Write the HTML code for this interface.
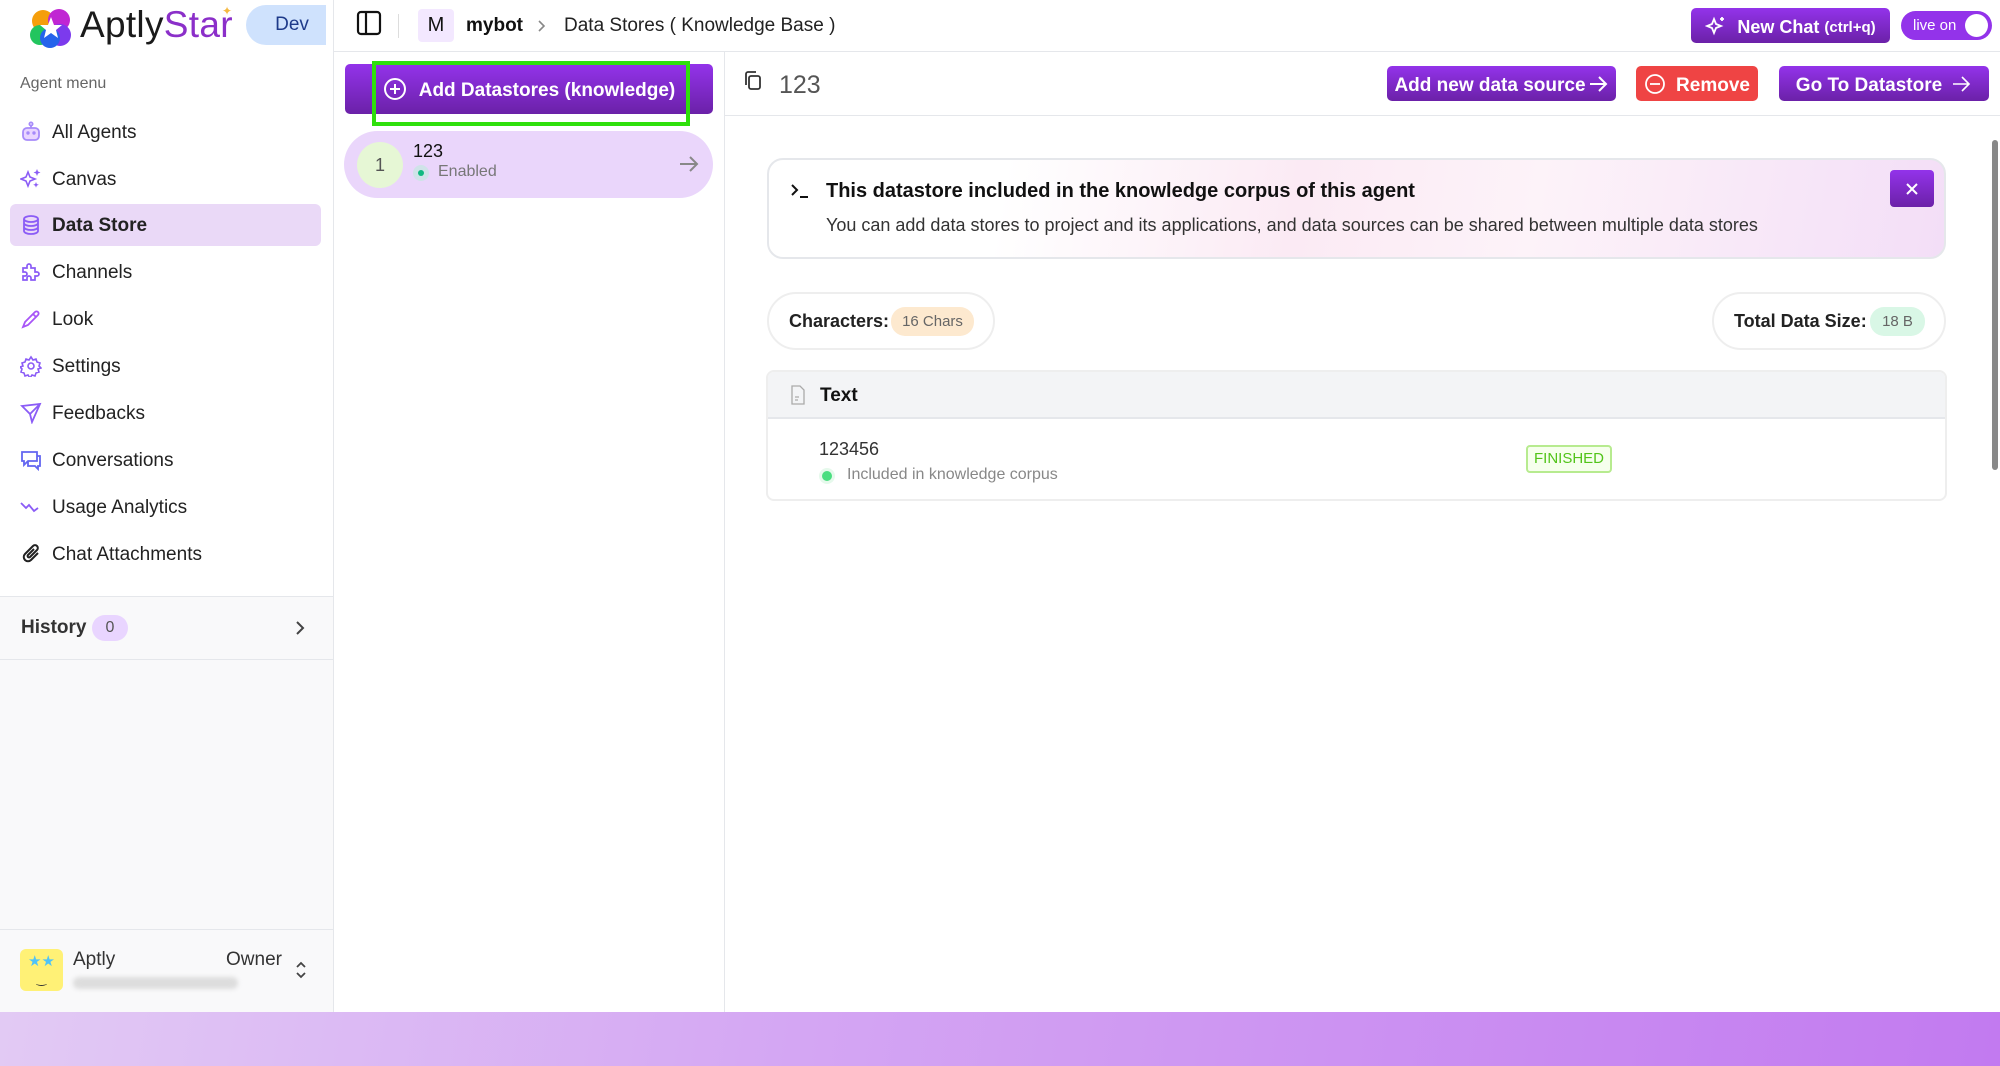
<!DOCTYPE html>
<html><head><meta charset="utf-8">
<style>
*{box-sizing:border-box;margin:0;padding:0}
body{width:2000px;height:1066px;overflow:hidden;font-family:"Liberation Sans",sans-serif;background:#fff;position:relative;color:#222}
.abs{position:absolute}
.btn{position:absolute;background:linear-gradient(#9333ea,#6b21a8);color:#fff;border-radius:5px;display:flex;align-items:center;justify-content:center;font-size:19px;font-weight:bold;line-height:1;padding-top:3px}
.btn svg{flex:none;margin-top:-3px}
.mi{position:absolute;left:10px;width:311px;height:42px;font-size:19px;color:#222;border-radius:6px}
.mi svg{position:absolute;left:10px;top:10px}
.mi span{position:absolute;left:42px;top:11px}
</style></head><body>

<!-- sidebar -->
<div class="abs" style="left:0;top:0;width:334px;height:1012px;background:#fff;border-right:1px solid #e5e7eb"></div>
<div class="abs" style="left:0;top:596px;width:333px;height:416px;background:#f9f9fa;border-top:1px solid #e5e7eb"></div>
<div class="abs" style="left:0;top:659px;width:333px;height:1px;background:#e5e7eb"></div>
<div class="abs" style="left:0;top:929px;width:333px;height:1px;background:#e5e7eb"></div>

<!-- logo -->
<svg class="abs" style="left:30px;top:8px" width="42" height="40" viewBox="0 0 42 40">
<circle cx="13" cy="13" r="11" fill="#f59e0b"/><circle cx="29" cy="12" r="11" fill="#c026d3"/><circle cx="10" cy="27" r="10" fill="#22c55e"/><circle cx="30" cy="27" r="11" fill="#7c3aed"/><circle cx="20" cy="30" r="10" fill="#2563eb"/>
<polygon points="21,9 24,17 32,17 26,22 28,30 21,25 14,30 16,22 10,17 18,17" fill="#fff"/>
</svg>
<div class="abs" style="left:80px;top:4px;font-size:37px;letter-spacing:0.3px"><span style="color:#1a1a1a">Aptly</span><span style="color:#8b2fc9">Star</span></div>
<div class="abs" style="left:222px;top:4px;color:#f5b942;font-size:12px">✦</div>
<div class="abs" style="left:246px;top:5px;width:80px;height:40px;background:#cfe2fd;border-radius:20px 0 0 20px;color:#1e3a8a;font-size:19px;display:flex;align-items:center;justify-content:center;padding-left:12px">Dev</div>

<div class="abs" style="left:20px;top:75px;font-size:16px;color:#666">Agent menu</div>

<div class="mi" style="top:111px"><svg width="22" height="22" viewBox="0 0 22 22" fill="none" stroke="#a78bfa" stroke-width="1.8"><rect x="3" y="7" width="16" height="12" rx="4" fill="#e9d5ff"/><circle cx="11" cy="3" r="1.6"/><line x1="11" y1="4.5" x2="11" y2="7"/><circle cx="8" cy="12" r=".8" fill="#7c3aed"/><circle cx="14" cy="12" r=".8" fill="#7c3aed"/></svg><span>All Agents</span></div>
<div class="mi" style="top:158px"><svg width="22" height="22" viewBox="0 0 22 22" fill="#8b5cf6"><path d="M8 4l2 5 5 2-5 2-2 5-2-5-5-2 5-2z" fill="none" stroke="#8b5cf6" stroke-width="1.6"/><path d="M17 1l1 2.5 2.5 1-2.5 1-1 2.5-1-2.5-2.5-1 2.5-1z"/><path d="M16 14l.8 2 2 .8-2 .8-.8 2-.8-2-2-.8 2-.8z"/></svg><span>Canvas</span></div>
<div class="mi" style="top:204px;background:#ead9f7"><svg width="22" height="22" viewBox="0 0 22 22" fill="none" stroke="#8b5cf6" stroke-width="1.8"><ellipse cx="11" cy="5" rx="7" ry="3"/><path d="M4 5v12c0 1.7 3 3 7 3s7-1.3 7-3V5M4 9c0 1.7 3 3 7 3s7-1.3 7-3M4 13c0 1.7 3 3 7 3s7-1.3 7-3"/></svg><span style="font-weight:bold">Data Store</span></div>
<div class="mi" style="top:251px"><svg width="22" height="22" viewBox="0 0 22 22" fill="none" stroke="#8b5cf6" stroke-width="1.7"><path d="M3 7h4V5a2 2 0 014 0v2h4v4h2a2 2 0 010 4h-2v4H11v-2a2 2 0 00-4 0v2H3v-4h2a2 2 0 000-4H3z"/></svg><span>Channels</span></div>
<div class="mi" style="top:298px"><svg width="22" height="22" viewBox="0 0 22 22" fill="none" stroke="#a855f7" stroke-width="1.8"><path d="M3 19l2-5 8-8 3 3-8 8zM13 6l2-2a2 2 0 013 3l-2 2"/></svg><span>Look</span></div>
<div class="mi" style="top:345px"><svg width="22" height="22" viewBox="0 0 22 22" fill="none" stroke="#8b5cf6" stroke-width="1.6"><circle cx="11" cy="11" r="3"/><path d="M11 2l2 3 3-1 1 3 3 1-1 3 2 2-3 1 1 3-3 1-1 3-3-1-2 3-2-3-3 1-1-3-3-1 1-3-2-2 3-1-1-3 3-1 1-3 3 1z"/></svg><span>Settings</span></div>
<div class="mi" style="top:392px"><svg width="22" height="22" viewBox="0 0 22 22" fill="none" stroke="#8b5cf6" stroke-width="1.8"><path d="M2 4l18-2-8 18-2-8zM10 12l10-10"/></svg><span>Feedbacks</span></div>
<div class="mi" style="top:439px"><svg width="22" height="22" viewBox="0 0 22 22" fill="none" stroke="#6366f1" stroke-width="1.8"><path d="M2 3h15v9H8l-4 4v-4H2zM17 7h3v10h-2v3l-3-3H8v-5"/></svg><span>Conversations</span></div>
<div class="mi" style="top:486px"><svg width="22" height="22" viewBox="0 0 22 22" fill="none" stroke="#8b5cf6" stroke-width="1.8"><path d="M1 7l5 5 3-3 5 6 4-3"/></svg><span>Usage Analytics</span></div>
<div class="mi" style="top:533px"><svg width="22" height="22" viewBox="0 0 22 22" fill="none" stroke="#222" stroke-width="2"><path d="M18 10l-7 7a4 4 0 01-6-6l8-8a2.5 2.5 0 014 4l-7 7a1 1 0 01-2-2l6-6"/></svg><span>Chat Attachments</span></div>

<div class="abs" style="left:21px;top:617px;font-size:19px;color:#333;font-weight:bold">History</div>
<div class="abs" style="left:92px;top:615px;width:36px;height:26px;border-radius:13px;background:#e9d5ff;font-size:16px;color:#555;text-align:center;line-height:26px">0</div>
<svg class="abs" style="left:294px;top:619px" width="12" height="18" viewBox="0 0 12 18" fill="none" stroke="#444" stroke-width="2"><path d="M3 3l6 6-6 6"/></svg>

<!-- user -->
<div class="abs" style="left:20px;top:949px;width:43px;height:42px;background:#fff176;border-radius:6px;font-size:15px;color:#4fc3f7;text-align:center;line-height:26px">★★<div style="color:#333;line-height:8px;font-size:12px">‿</div></div>
<div class="abs" style="left:73px;top:949px;font-size:19px;color:#333">Aptly</div>
<div class="abs" style="left:73px;top:977px;width:165px;height:12px;background:#ddd;border-radius:6px;filter:blur(2px)"></div>
<div class="abs" style="left:226px;top:949px;font-size:19px;color:#333">Owner</div>
<svg class="abs" style="left:295px;top:960px" width="12" height="20" viewBox="0 0 12 20" fill="none" stroke="#444" stroke-width="1.8"><path d="M2 7l4-4 4 4M2 13l4 4 4-4"/></svg>

<!-- top bar -->
<div class="abs" style="left:334px;top:51px;width:1666px;height:1px;background:#e5e7eb"></div>
<svg class="abs" style="left:356px;top:10px" width="26" height="26" viewBox="0 0 26 26" fill="none" stroke="#111" stroke-width="2.2"><rect x="2" y="2" width="22" height="22" rx="3"/><line x1="10" y1="2" x2="10" y2="24"/></svg>
<div class="abs" style="left:398px;top:14px;width:1px;height:24px;background:#ddd"></div>
<div class="abs" style="left:418px;top:9px;width:36px;height:33px;background:#f3e8ff;border-radius:4px;font-size:20px;text-align:center;line-height:33px;color:#111">M</div>
<div class="abs" style="left:466px;top:15px;font-size:19px;font-weight:bold;color:#111">mybot</div>
<svg class="abs" style="left:536px;top:19px" width="10" height="14" viewBox="0 0 10 14" fill="none" stroke="#888" stroke-width="1.6"><path d="M3 2l5 5-5 5"/></svg>
<div class="abs" style="left:564px;top:15px;font-size:19px;color:#222">Data Stores ( Knowledge Base )</div>

<div class="btn" style="left:1691px;top:8px;width:199px;height:35px;font-size:18px"><svg width="22" height="22" viewBox="0 0 22 22" fill="none" stroke="#fff" stroke-width="1.8" style="margin-right:10px"><path d="M9 4l2 5 5 2-5 2-2 5-2-5-5-2 5-2z"/><path d="M17 2v4M15 4h4"/></svg>New Chat <span style="font-size:15px;margin-left:5px">(ctrl+q)</span></div>
<div class="abs" style="left:1901px;top:11px;width:91px;height:29px;background:#9333ea;border-radius:15px;color:#fff;font-size:15px;line-height:29px;padding-left:12px">live on</div>
<div class="abs" style="left:1965px;top:14px;width:23px;height:23px;background:#fff;border-radius:50%"></div>

<!-- middle panel -->
<div class="abs" style="left:724px;top:52px;width:1px;height:960px;background:#e5e7eb"></div>
<div class="btn" style="left:345px;top:64px;width:368px;height:50px;font-size:19px"><svg width="24" height="24" viewBox="0 0 24 24" fill="none" stroke="#fff" stroke-width="2" style="margin-right:12px"><circle cx="12" cy="12" r="10"/><path d="M12 7v10M7 12h10"/></svg>Add Datastores (knowledge)</div>
<div class="abs" style="left:372px;top:61px;width:318px;height:65px;border:4px solid #2fe00c"></div>
<div class="abs" style="left:344px;top:131px;width:369px;height:67px;background:#ead6fb;border-radius:34px"></div>
<div class="abs" style="left:357px;top:142px;width:46px;height:46px;background:#e6f7d5;border-radius:50%;font-size:18px;color:#555;text-align:center;line-height:46px">1</div>
<div class="abs" style="left:413px;top:141px;font-size:18px;color:#111">123</div>
<div class="abs" style="left:413px;top:165px;width:16px;height:16px;border-radius:50%;background:#cfe3e8"></div>
<div class="abs" style="left:418px;top:170px;width:6px;height:6px;border-radius:50%;background:#10b981"></div>
<div class="abs" style="left:438px;top:163px;font-size:16px;color:#777">Enabled</div>
<svg class="abs" style="left:678px;top:154px" width="22" height="20" viewBox="0 0 22 20" fill="none" stroke="#888" stroke-width="2"><path d="M2 10h17M12 3l7 7-7 7"/></svg>

<!-- right header -->
<div class="abs" style="left:725px;top:115px;width:1275px;height:1px;background:#e5e7eb"></div>
<svg class="abs" style="left:743px;top:70px" width="20" height="22" viewBox="0 0 20 22" fill="none" stroke="#333" stroke-width="1.8"><rect x="6" y="6" width="11" height="13" rx="2"/><path d="M3 15V4a2 2 0 012-2h8"/></svg>
<div class="abs" style="left:779px;top:71px;font-size:25px;color:#555">123</div>
<div class="btn" style="left:1387px;top:66px;width:229px;height:35px">Add new data source<svg width="20" height="18" viewBox="0 0 20 18" fill="none" stroke="#fff" stroke-width="2" style="margin-left:3px"><path d="M1 9h16M10 2l7 7-7 7"/></svg></div>
<div class="btn" style="left:1636px;top:66px;width:122px;height:35px;background:#ef4444"><svg width="22" height="22" viewBox="0 0 22 22" fill="none" stroke="#fff" stroke-width="1.8" style="margin-right:10px"><circle cx="11" cy="11" r="9"/><path d="M6 11h10"/></svg>Remove</div>
<div class="btn" style="left:1779px;top:66px;width:210px;height:35px">Go To Datastore<svg width="20" height="18" viewBox="0 0 20 18" fill="none" stroke="#fff" stroke-width="1.6" style="margin-left:10px"><path d="M1 9h16M10 2l7 7-7 7"/></svg></div>

<!-- scrollbar -->
<div class="abs" style="left:1992px;top:140px;width:6px;height:330px;background:#888;border-radius:3px"></div>

<!-- banner -->
<div class="abs" style="left:767px;top:158px;width:1179px;height:101px;border:2px solid #e5e7eb;border-radius:16px;background:linear-gradient(100deg,#fff 20%,#fbeaf4 45%,#fdf3f9 65%,#f3def7 100%)"></div>
<svg class="abs" style="left:790px;top:182px" width="20" height="18" viewBox="0 0 20 18" fill="none" stroke="#111" stroke-width="2"><path d="M2 3l5 5-5 5M10 15h8"/></svg>
<div class="abs" style="left:826px;top:180px;font-size:20px;font-weight:bold;color:#111">This datastore included in the knowledge corpus of this agent</div>
<div class="abs" style="left:826px;top:215px;font-size:18px;color:#333">You can add data stores to project and its applications, and data sources can be shared between multiple data stores</div>
<div class="abs" style="left:1890px;top:170px;width:44px;height:37px;background:linear-gradient(#9333ea,#6b21a8);border-radius:4px"></div>
<svg class="abs" style="left:1904px;top:181px" width="16" height="16" viewBox="0 0 16 16" stroke="#fff" stroke-width="2"><path d="M3 3l10 10M13 3L3 13"/></svg>

<!-- stats -->
<div class="abs" style="left:767px;top:292px;width:228px;height:58px;border:2px solid #eee;border-radius:29px"></div>
<div class="abs" style="left:789px;top:311px;font-size:18px;font-weight:bold;color:#222">Characters:</div>
<div class="abs" style="left:891px;top:307px;width:83px;height:29px;background:#fde9cf;border-radius:14px;font-size:15px;color:#666;text-align:center;line-height:29px">16 Chars</div>
<div class="abs" style="left:1712px;top:292px;width:234px;height:58px;border:2px solid #eee;border-radius:29px"></div>
<div class="abs" style="left:1734px;top:311px;font-size:18px;font-weight:bold;color:#222">Total Data Size:</div>
<div class="abs" style="left:1870px;top:307px;width:55px;height:29px;background:#d9f7e6;border-radius:14px;font-size:15px;color:#666;text-align:center;line-height:29px">18 B</div>

<!-- table -->
<div class="abs" style="left:766px;top:370px;width:1181px;height:131px;border:2px solid #eee;border-radius:8px;overflow:hidden">
<div style="height:47px;background:#f3f4f6;border-bottom:2px solid #e5e7eb"></div></div>
<svg class="abs" style="left:790px;top:385px" width="16" height="20" viewBox="0 0 16 20" fill="none" stroke="#aaa" stroke-width="1.3"><path d="M2 1h8l4 4v14H2z"/><path d="M5 12h4M5 15h3"/></svg>
<div class="abs" style="left:820px;top:385px;font-size:19px;font-weight:bold;color:#111">Text</div>
<div class="abs" style="left:819px;top:439px;font-size:18px;color:#333">123456</div>
<div class="abs" style="left:822px;top:471px;width:10px;height:10px;border-radius:50%;background:#4ade80;box-shadow:0 0 0 3px #e6f9ec"></div>
<div class="abs" style="left:847px;top:466px;font-size:16px;color:#888">Included in knowledge corpus</div>
<div class="abs" style="left:1526px;top:445px;width:86px;height:28px;border:2px solid #b7eb8f;background:#f6ffed;border-radius:4px;font-size:15px;color:#52c41a;text-align:center;line-height:24px">FINISHED</div>

<!-- bottom gradient -->
<div class="abs" style="left:0;top:1012px;width:2000px;height:54px;background:linear-gradient(100deg,#e2caf4 0%,#d4a6f3 40%,#c27af0 100%)"></div>
</body></html>
